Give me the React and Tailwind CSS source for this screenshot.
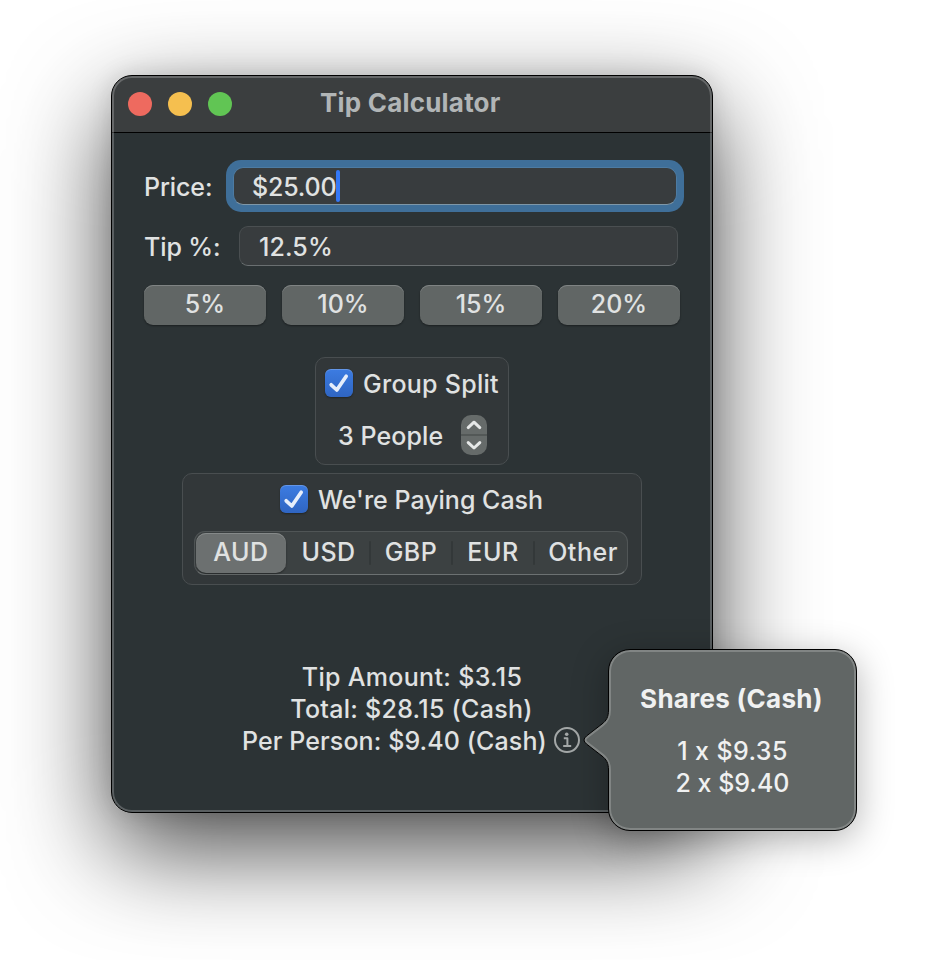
const box = 'rounded-[10px] border border-[#494e50] bg-[#323739] pt-[11px]'

function Check() {
  return (
    <span className="flex size-7 shrink-0 items-center justify-center rounded-[6px] bg-linear-to-b from-[#3c7ce2] to-[#2f65c2] shadow-[0_1px_2px_rgba(0,0,0,0.35),inset_0_1px_0_rgba(255,255,255,0.2)]">
      <svg viewBox="0 0 28 28" className="size-7" fill="none" stroke="#e6eefb" strokeWidth="3.7" strokeLinecap="round" strokeLinejoin="round">
        <path d="M6.2 15.8 L11.8 21 L21.2 7.2" />
      </svg>
    </span>
  )
}

function InfoIcon() {
  return (
    <svg viewBox="0 0 26 26" className="mt-0.5 size-[26px]" fill="none" stroke="#a3a7a7" strokeWidth="2">
      <circle cx="13" cy="13" r="12" />
      <circle cx="12.7" cy="7.3" r="1.8" fill="#a3a7a7" stroke="none" />
      <path d="M9.8 11.3 H13.4 V18.8 M9.2 19 H17.2" strokeLinejoin="round" />
    </svg>
  )
}

function Divider() {
  return <i className="h-6 w-0.5 shrink-0 rounded-full bg-[#333839]" />
}

const tips = ['5%', '10%', '15%', '20%']

export default function App() {
  return (
    <div className="relative h-[960px] w-[928px] overflow-hidden bg-white pl-[111px] pt-[75px] font-['Inter','Liberation_Sans',sans-serif] text-[25px] leading-8 font-[450] whitespace-nowrap text-[#e0e2e2]">
      <div className="relative h-[738px] w-[602px] rounded-[21px] shadow-[0_36px_100px_rgba(0,0,0,0.72),0_0_24px_rgba(0,0,0,0.12)]">
        <div className="relative h-full overflow-hidden rounded-[21px] border border-black bg-[#2c3335]">
          <header className="flex h-[57px] items-center border-b border-black bg-[#3b3e3f] pl-4">
            <div className="flex gap-4">
              <i className="size-6 rounded-full bg-[#ee6a5f]" />
              <i className="size-6 rounded-full bg-[#f5bf4f]" />
              <i className="size-6 rounded-full bg-[#61c554]" />
            </div>
            <h1 className="-mt-0.5 ml-[88px] text-[26px] font-bold tracking-[0.2px] text-[#b1b5b6]">Tip Calculator</h1>
          </header>
          <main className="pt-[27px]">
            <div className="flex h-[52px] items-center pl-8">
              <label className="w-[82px] pt-0.5 tracking-[-0.1px]">Price:</label>
              <div className="flex h-[52px] w-[458px] items-center rounded-[15px] bg-[#3f6f99] p-[7px]">
                <div className="flex h-full w-full items-center rounded-[10px] border border-[#4d7ba2] border-b-[#7e97a8] bg-[#383c3e] pl-[18px]">
                  <span className="pt-0.5 tracking-[-0.2px]">$25.00</span>
                  <i className="h-8 w-1 rounded-full bg-[#3478f6]" />
                </div>
              </div>
            </div>
            <div className="mt-[14px] flex h-10 items-center pl-8">
              <label className="w-[95px] pt-0.5 tracking-[-0.12px]">Tip %:</label>
              <div className="flex h-10 w-[439px] items-center rounded-[9px] border border-[#4a4f51] border-b-[#6a6f71] bg-[#383c3e] pt-0.5 pl-[19px] tracking-[0.1px]">
                12.5%
              </div>
            </div>
            <div className="mt-[19px] flex gap-4 pl-8">
              {tips.map((t) => (
                <button key={t} className="h-10 w-[122px] rounded-[9px] bg-[#616665] pb-0.5 shadow-[0_1px_2px_rgba(0,0,0,0.4),inset_0_1px_0_#7f8383]">
                  {t}
                </button>
              ))}
            </div>
            <section className={'mt-8 ml-[203px] h-[108px] w-[194px] pl-[9px] ' + box}>
              <div className="flex h-7 items-center gap-[10px]">
                <Check />
                <span className="pt-0.5 tracking-[0.27px]">Group Split</span>
              </div>
              <div className="mt-[18px] flex h-10 items-center pl-[13px]">
                <span className="w-[123px] pt-0.5 tracking-[0.1px]">3 People</span>
                <svg viewBox="0 0 26 40" className="h-10 w-[26px]" fill="none">
                  <rect width="26" height="40" rx="10" fill="#666b6a" />
                  <rect y="19" width="26" height="2" fill="#535857" />
                  <path d="M7.2 12.6 L13 7.2 L18.8 12.6 M7.2 27.6 L13 33 L18.8 27.6" stroke="#e6e8e8" strokeWidth="3" strokeLinecap="round" strokeLinejoin="round" />
                </svg>
              </div>
            </section>
            <section className={'mt-2 ml-[70px] h-[112px] w-[460px] ' + box}>
              <div className="flex h-7 items-center gap-[10px] pl-[97px]">
                <Check />
                <span className="pt-0.5">We&apos;re Paying Cash</span>
              </div>
              <div className="mt-[18px] ml-[11px] flex h-11 w-[434px] items-center rounded-[11px] border border-[#505556] border-b-[#6c7172] bg-[#3c4142] text-center leading-[38px] tracking-[0.5px]">
                <span className="ml-px h-10 w-[90px] rounded-[10px] bg-[#6c7070] shadow-[0_1px_2px_rgba(0,0,0,0.4),inset_0_1px_0_#858989]">AUD</span>
                <span className="h-10 w-[83px] pl-0.5">USD</span>
                <Divider />
                <span className="h-10 w-20">GBP</span>
                <Divider />
                <span className="h-10 w-20">EUR</span>
                <Divider />
                <span className="h-10 w-[92px] pl-1">Other</span>
              </div>
            </section>
            <div className="mt-[76px] text-center">
              <p className="tracking-[0.32px]">Tip Amount: $3.15</p>
              <p className="pr-px tracking-[0.28px]">Total: $28.15 (Cash)</p>
              <div className="flex items-center pl-[130px]">
                <span className="w-[312px] text-left tracking-[0.1px]">Per Person: $9.40 (Cash)</span>
                <div className="-mt-1"><InfoIcon /></div>
              </div>
            </div>
          </main>
          <div className="pointer-events-none absolute inset-0 rounded-[20px] shadow-[inset_0_0_0_2px_rgba(255,255,255,0.22)]" />
        </div>
      </div>
      <div className="absolute top-[649px] left-[608px] h-[182px] w-[249px] rounded-[22px] border border-black bg-[#616665] pt-[33px] text-center text-[#f0f1f1] shadow-[0_8px_36px_rgba(0,0,0,0.3),inset_0_0_0_2px_#818584]">
        <svg viewBox="0 0 40 80" className="absolute top-[50px] -left-[29px] h-20 w-10" fill="none">
          <clipPath id="arrow">
            <path d="M28.5 10 C28.5 17 26.5 20.5 22 24 L6.5 36 Q1.5 40 6.5 44 L22 56 C26.5 59.5 28.5 63 28.5 70 H34 V10 Z" />
          </clipPath>
          <g clipPath="url(#arrow)">
            <rect width="40" height="80" fill="#616665" />
            <path d="M28.5 9 V10 C28.5 17 26.5 20.5 22 24 L6.5 36 Q1.5 40 6.5 44 L22 56 C26.5 59.5 28.5 63 28.5 70 V71" stroke="#818584" strokeWidth="5" />
          </g>
          <path d="M28.5 10 C28.5 17 26.5 20.5 22 24 L6.5 36 Q1.5 40 6.5 44 L22 56 C26.5 59.5 28.5 63 28.5 70" stroke="#000" />
        </svg>
        <p className="pr-0.5 text-[26px] font-bold tracking-[0.28px]">Shares (Cash)</p>
        <div className="mt-5">
          <p className="tracking-[0.4px]">1 x $9.35</p>
          <p>2 x $9.40</p>
        </div>
      </div>
    </div>
  )
}
